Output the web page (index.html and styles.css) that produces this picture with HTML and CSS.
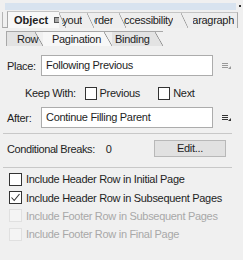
FILE: index.html
```html
<!DOCTYPE html>
<html>
<head>
<meta charset="utf-8">
<link rel="stylesheet" href="styles.css">
</head>
<body>
<div class="panel">
  <div class="top">
    <div class="titlebar"></div>
    <div class="grip"></div>
  </div>
  <div class="tabs1">
    <div class="t1 t-object"><b>Object</b><span class="close"></span></div>
    <div class="t1 t-layout"><span class="clip">Layout</span></div>
    <div class="t1 t-border"><span class="clip">Border</span></div>
    <div class="t1 t-access"><span class="clip">Accessibility</span></div>
    <div class="t1 t-para"><span class="clip">Paragraph</span></div>
  </div>
  <div class="tabs2">
    <div class="t2 t-row">Row</div>
    <div class="t2 t-pag active">Pagination</div>
    <div class="t2 t-bind">Binding</div>
  </div>
  <div class="content">
    <div class="frow first">
      <span class="lbl">Place:</span>
      <div class="input">Following Previous</div>
      <svg class="menu light" width="9" height="8" viewBox="0 0 9 8"><rect x="0" y="1" width="6" height="1"/><rect x="0" y="3" width="6" height="1"/><rect x="0" y="5" width="6" height="1"/><polygon points="6,7 9,7 9,4"/></svg>
    </div>
    <div class="keep">
      <span class="keeplbl">Keep With:</span>
      <span class="cb"></span><span class="cbtxt">Previous</span>
      <span class="cb next"></span><span class="cbtxt">Next</span>
    </div>
    <div class="frow second">
      <span class="lbl">After:</span>
      <div class="input">Continue Filling Parent</div>
      <svg class="menu" width="9" height="8" viewBox="0 0 9 8"><rect x="0" y="1" width="6" height="1"/><rect x="0" y="3" width="6" height="1"/><rect x="0" y="5" width="6" height="1"/><polygon points="6,7 9,7 9,4"/></svg>
    </div>
    <div class="sep"></div>
    <div class="cond">
      <span class="condtxt">Conditional Breaks:<span class="num">0</span></span>
      <div class="btn">Edit...</div>
    </div>
    <div class="sep sep2"></div>
    <div class="checks">
      <div class="chk"><span class="box"></span><span>Include Header Row in Initial Page</span></div>
      <div class="chk"><span class="box"><svg width="11" height="11" viewBox="0 0 11 11"><polyline points="1.5,5.5 4.2,8.5 9.5,2" fill="none" stroke="#333" stroke-width="1.1"/></svg></span><span>Include Header Row in Subsequent Pages</span></div>
      <div class="chk dis"><span class="box"></span><span>Include Footer Row in Subsequent Pages</span></div>
      <div class="chk dis"><span class="box"></span><span>Include Footer Row in Final Page</span></div>
    </div>
  </div>
</div>
</body>
</html>
```

FILE: styles.css
```css
html, body {
  margin: 0;
  padding: 0;
  background: #f0f0f0;
}
body {
  font-family: "Liberation Sans", Arial, sans-serif;
  font-size: 11px;
  letter-spacing: -0.3px;
  color: #1e1e1e;
  width: 243px;
  height: 260px;
  overflow: hidden;
}
.top {
  display: flex;
  align-items: flex-start;
  padding-top: 3px;
}
.titlebar {
  flex: 1;
  height: 7px;
  margin-left: 5px;
  background: #d8e3ef;
}
.grip {
  width: 2px;
  height: 2px;
  background: #333;
  margin: 2px 2px 0 3px;
}
.tabs1 {
  display: flex;
  height: 15px;
  margin-top: 2px;
  margin-left: 2px;
  padding-left: 4px;
  border-left: 1px solid #b5b5b5;
  width: 231px;
  border-bottom: 1px solid #a8a8a8;
}
.t1 {
  display: flex;
  align-items: center;
  white-space: nowrap;
  box-sizing: border-box;
  height: 16px;
  line-height: 15px;
  border-top: 1px solid #c4c4c4;
  color: #222;
  background: linear-gradient(to top right, transparent calc(50% - 0.7px), #9a9a9a 50%, transparent calc(50% + 0.7px)) left / 7px 100% no-repeat, #eeeeee;
}
.clip {
  flex: 1;
  display: flex;
  justify-content: flex-end;
  overflow: hidden;
}
.t-object {
  width: 52px;
  padding-left: 6px;
  border-left: 1px solid #a8a8a8;
  background: #f8f8f8;
  margin-top: -1px;
  height: 17px;
}
.t-object b {
  font-weight: bold;
  letter-spacing: 0;
}
.close {
  display: inline-block;
  flex: none;
  width: 5px;
  height: 4px;
  border: 1px solid #555;
  background: #aaa;
  margin-left: 6px;
}
.t-layout { width: 28px; padding: 0 5px 0 3px; }
.t-border { width: 32px; padding: 0 6px 0 7px; }
.t-access { width: 62px; padding: 0 8px 0 5px; }
.t-para { width: 57px; padding: 0 3px 0 12px; border-right: 1px solid #a8a8a8; }

.tabs2 {
  display: flex;
  height: 15px;
  margin-top: 3px;
  margin-left: 6px;
}
.t2 {
  box-sizing: border-box;
  height: 15px;
  line-height: 14px;
  white-space: nowrap;
  border-top: 1px solid #a8a8a8;
  padding-right: 8px;
  background: linear-gradient(to top right, #e3e3e3 calc(50% - 0.7px), #8a8a8a 50%, transparent calc(50% + 0.7px)) right / 8px 100% no-repeat, linear-gradient(#e3e3e3, #e3e3e3) left / calc(100% - 8px) 100% no-repeat;
}
.t-row {
  width: 37px;
  padding-left: 10px;
  border-left: 1px solid #a8a8a8;
}
.t-pag {
  width: 69px;
  padding-left: 9px;
  background: linear-gradient(to top right, #f7f7f7 calc(50% - 0.7px), #8a8a8a 50%, transparent calc(50% + 0.7px)) right / 8px 100% no-repeat, linear-gradient(#f7f7f7, #f7f7f7) left / calc(100% - 8px) 100% no-repeat;
}
.t-bind {
  width: 51px;
  padding-left: 3px;
}

.content {
  padding: 0 11px 0 3px;
}
.frow {
  display: flex;
  align-items: center;
  padding-left: 4px;
}
.frow.first { margin-top: 9px; }
.frow.second { margin-top: 8px; }
.lbl {
  width: 34px;
}
.input {
  box-sizing: border-box;
  width: 172px;
  height: 21px;
  line-height: 19px;
  border: 1px solid #acacac;
  background: #fff;
  padding-left: 4px;
  white-space: nowrap;
  overflow: hidden;
}
.menu {
  margin-left: 9px;
  fill: #333;
}
.menu.light { fill: #999; }

.keep {
  display: flex;
  align-items: center;
  height: 12px;
  margin-top: 11px;
  padding-left: 22px;
}
.keeplbl { width: 61px; }
.cb {
  box-sizing: border-box;
  width: 12px;
  height: 13px;
  border: 1px solid #333;
  background: #fff;
  margin-right: 3px;
}
.keep .cbtxt { width: 60px; }
.sep {
  height: 1px;
  background: #c8c8c8;
  margin-top: 5px;
}
.cond {
  display: flex;
  align-items: center;
  justify-content: space-between;
  padding-left: 4px;
  margin-top: 6px;
  height: 17px;
}
.condtxt { letter-spacing: -0.4px; }
.num { margin-left: 11px; }
.btn {
  box-sizing: border-box;
  width: 72px;
  height: 17px;
  line-height: 15px;
  text-align: center;
  border: 1px solid #b8b8b8;
  background: #e1e1e1;
  margin-right: 6px;
}
.sep2 { margin-top: 10px; }
.checks {
  padding-left: 6px;
  margin-top: 2px;
}
.chk {
  display: flex;
  align-items: center;
  height: 18.4px;
  white-space: nowrap;
}
.box {
  box-sizing: border-box;
  flex: none;
  width: 13px;
  height: 13px;
  border: 1px solid #333;
  background: #fff;
  margin-right: 4px;
  display: flex;
  align-items: center;
  justify-content: center;
}
.chk.dis { color: #a8a8a8; }
.chk.dis .box {
  border-color: #e0e0e0;
  background: #f4f4f4;
}
```
